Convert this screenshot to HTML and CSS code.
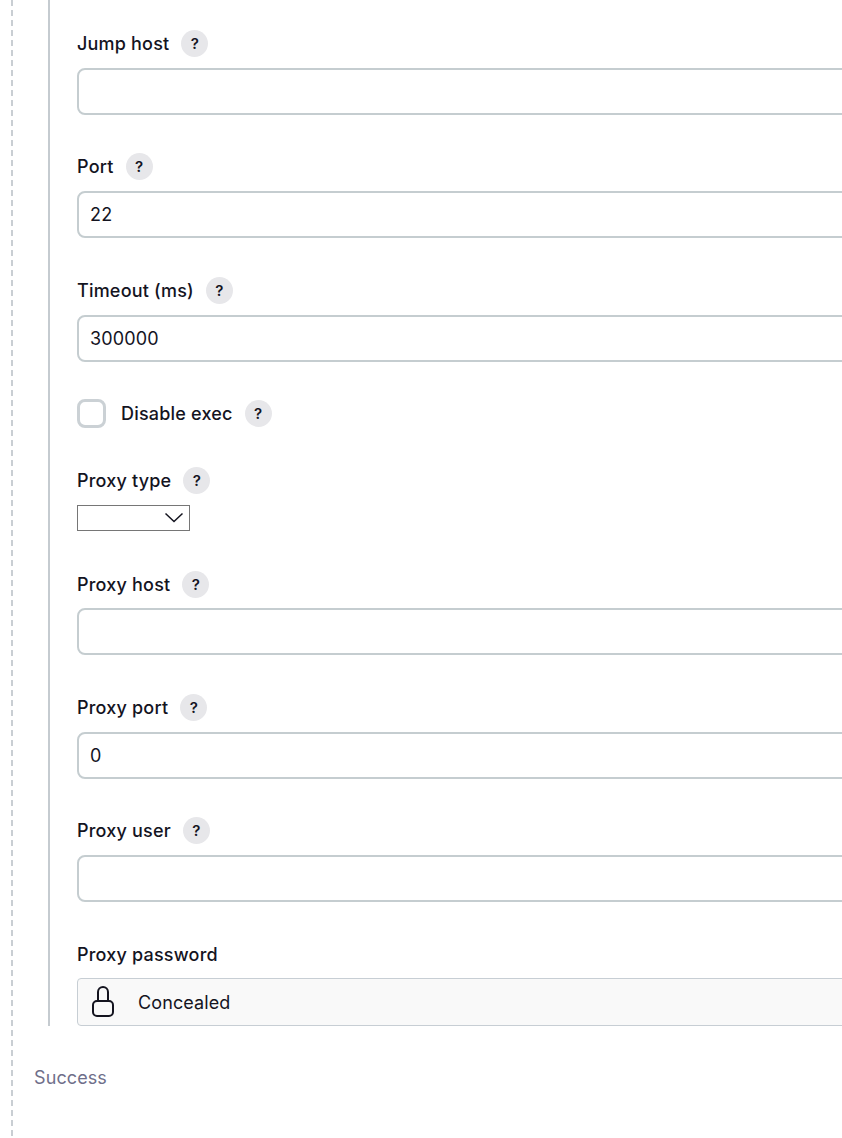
FILE: index.html
```html
<!DOCTYPE html>
<html lang="en">
<head>
<meta charset="utf-8">
<title>SSH settings</title>
<link rel="stylesheet" href="styles.css">
</head>
<body>
<div class="rail">
  <div class="group">
    <div class="field field-a">
      <div class="label"><span>Jump host</span><span class="help">?</span></div>
      <input class="text" type="text" value="">
    </div>
    <div class="field field-b">
      <div class="label"><span>Port</span><span class="help">?</span></div>
      <input class="text" type="text" value="22">
    </div>
    <div class="field field-tight">
      <div class="label"><span>Timeout (ms)</span><span class="help">?</span></div>
      <input class="text" type="text" value="300000">
    </div>
    <div class="check-row">
      <span class="checkbox"></span>
      <span class="check-label">Disable exec</span>
      <span class="help">?</span>
    </div>
    <div class="field field-select">
      <div class="label"><span>Proxy type</span><span class="help">?</span></div>
      <div class="select">
        <svg class="chevron" viewBox="0 0 20 11" width="20" height="11"><path d="M1.500 1.500 10 9.500l8.500-8" fill="none" stroke="#14141f" stroke-width="1.500"/></svg>
      </div>
    </div>
    <div class="field field-host">
      <div class="label"><span>Proxy host</span><span class="help">?</span></div>
      <input class="text" type="text" value="">
    </div>
    <div class="field">
      <div class="label"><span>Proxy port</span><span class="help">?</span></div>
      <input class="text" type="text" value="0">
    </div>
    <div class="field">
      <div class="label"><span>Proxy user</span><span class="help">?</span></div>
      <input class="text" type="text" value="">
    </div>
    <div class="field field-last">
      <div class="label"><span>Proxy password</span></div>
      <div class="concealed">
        <svg class="lock" viewBox="0 0 24 32" width="24" height="32"><path d="M7 15V6a5 5 0 0 1 10 0v9" fill="none" stroke="#14141f" stroke-width="2"/><rect x="2" y="15" width="20" height="15" rx="4" fill="none" stroke="#14141f" stroke-width="2"/></svg>
        <span class="concealed-text">Concealed</span>
      </div>
    </div>
  </div>
  <div class="status">Success</div>
</div>
</body>
</html>
```
FILE: styles.css
```css
html, body {
  margin: 0;
  padding: 0;
  height: 1138px;
  overflow: hidden;
  background: #fff;
  font-family: Inter, "Liberation Sans", sans-serif;
  color: #14141f;
}
.rail {
  margin-left: 11px;
  width: 831px;
  height: 1136px;
  box-sizing: border-box;
  overflow: hidden;
  border-left: 2px dashed #c9ced3;
}
.group {
  margin-left: 35px;
  border-left: 2px solid #c5cbd0;
  padding-left: 27px;
  height: 1026px;
  box-sizing: border-box;
  padding-top: 30px;
}
.field {
  margin-bottom: 38.5px;
}
.field-a {
  margin-bottom: 38px;
}
.field-b {
  margin-bottom: 39px;
}
.field-tight {
  margin-bottom: 37px;
}
.label {
  display: flex;
  align-items: center;
  gap: 12px;
  height: 27px;
  margin-bottom: 11px;
  font-size: 18px;
  font-weight: 500;
  line-height: 27px;
  letter-spacing: 0.2px;
}
.help {
  width: 27px;
  height: 27px;
  flex: none;
  border-radius: 50%;
  background: #e7e7ea;
  display: flex;
  align-items: center;
  justify-content: center;
  font-size: 15px;
  font-weight: 600;
  letter-spacing: 0;
  color: #14141f;
}
.text {
  display: block;
  box-sizing: border-box;
  width: 800px;
  height: 47px;
  padding: 0 11px;
  border: 2px solid #c5cdd0;
  border-radius: 8px;
  background: #fff;
  font: 400 18px Inter, "Liberation Sans", sans-serif;
  letter-spacing: 0.15px;
  color: #14141f;
  outline: none;
}
.check-row {
  display: flex;
  align-items: center;
  height: 29px;
  margin-bottom: 38.5px;
  font-size: 18px;
  font-weight: 500;
  letter-spacing: 0.2px;
}
.checkbox {
  box-sizing: border-box;
  width: 29px;
  height: 29px;
  border: 3px solid #cbd1d5;
  border-radius: 8px;
  background: #fff;
}
.check-label {
  margin-left: 15px;
  margin-right: 12px;
}
.field-select {
  margin-bottom: 40px;
}
.field-host .label {
  margin-bottom: 10.5px;
}
.select {
  box-sizing: border-box;
  width: 113px;
  height: 26px;
  border: 1px solid #767676;
  display: flex;
  align-items: center;
  justify-content: flex-end;
  padding-right: 5px;
  background: #fff;
}
.concealed {
  box-sizing: border-box;
  width: 800px;
  height: 48px;
  display: flex;
  align-items: center;
  gap: 23px;
  padding-left: 13px;
  border: 1px solid #c7ced4;
  border-radius: 4px;
  background: #f9f9f9;
  font-size: 18px;
  letter-spacing: 0.1px;
}
.concealed-text {
  margin-top: 2px;
}
.field-last {
  margin-bottom: 0;
}
.field-last .label {
  margin-bottom: 10px;
}
.status {
  margin: 38px 0 0 21px;
  font-size: 18px;
  line-height: 27px;
  letter-spacing: 0.1px;
  color: #6f6f8a;
}
```
